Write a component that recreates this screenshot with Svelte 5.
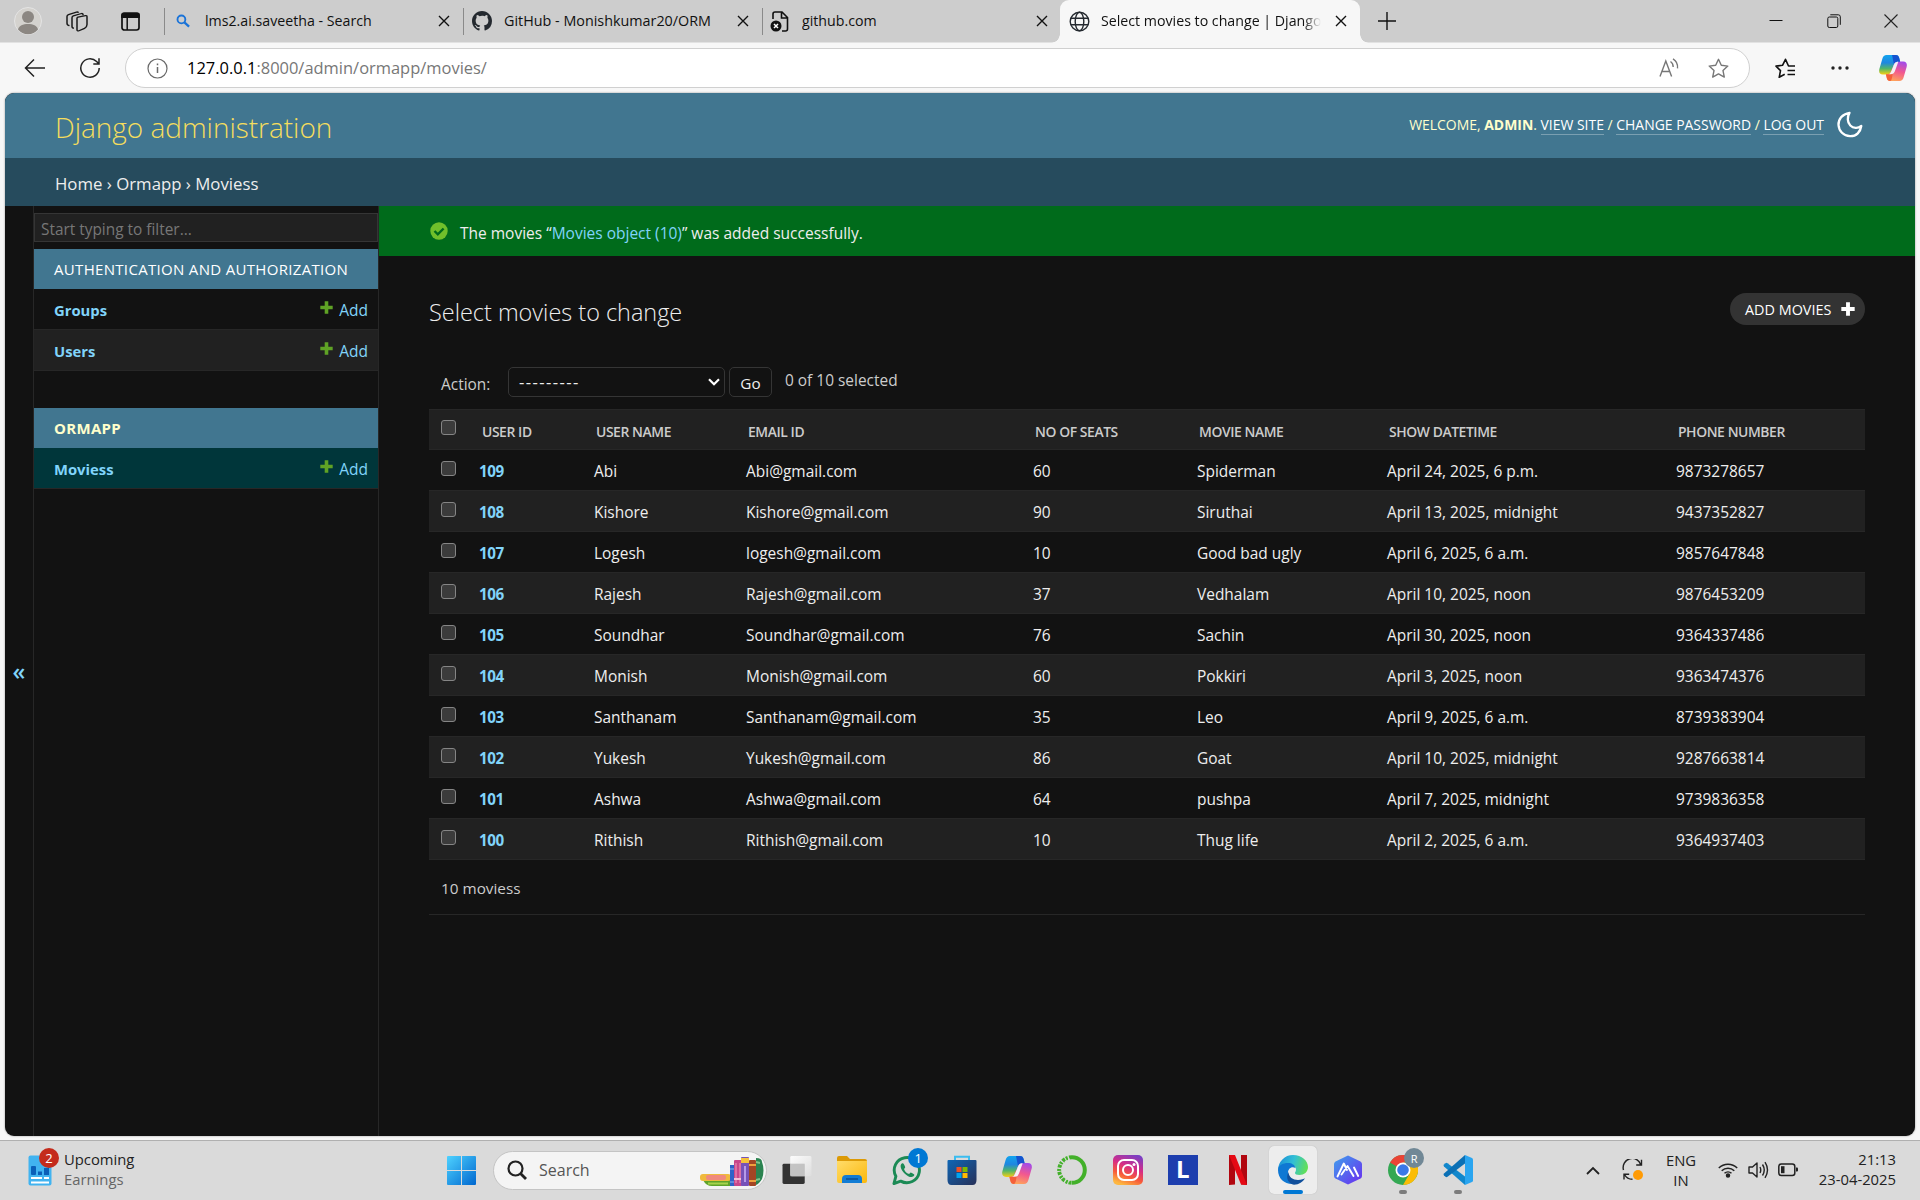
<script>
  const tabs = [
    { kind: 'search', title: 'lms2.ai.saveetha - Search', cls: 't1' },
    { kind: 'github', title: 'GitHub - Monishkumar20/ORM', cls: 't2' },
    { kind: 'file', title: 'github.com', cls: 't3' },
    { kind: 'globe', title: 'Select movies to change | Django', cls: 't4' },
  ];
  const columns = ['User ID', 'User Name', 'Email ID', 'No of seats', 'Movie Name', 'Show DateTime', 'Phone Number'];
  const rows = [
    ['109', 'Abi', 'Abi@gmail.com', '60', 'Spiderman', 'April 24, 2025, 6 p.m.', '9873278657'],
    ['108', 'Kishore', 'Kishore@gmail.com', '90', 'Siruthai', 'April 13, 2025, midnight', '9437352827'],
    ['107', 'Logesh', 'logesh@gmail.com', '10', 'Good bad ugly', 'April 6, 2025, 6 a.m.', '9857647848'],
    ['106', 'Rajesh', 'Rajesh@gmail.com', '37', 'Vedhalam', 'April 10, 2025, noon', '9876453209'],
    ['105', 'Soundhar', 'Soundhar@gmail.com', '76', 'Sachin', 'April 30, 2025, noon', '9364337486'],
    ['104', 'Monish', 'Monish@gmail.com', '60', 'Pokkiri', 'April 3, 2025, noon', '9363474376'],
    ['103', 'Santhanam', 'Santhanam@gmail.com', '35', 'Leo', 'April 9, 2025, 6 a.m.', '8739383904'],
    ['102', 'Yukesh', 'Yukesh@gmail.com', '86', 'Goat', 'April 10, 2025, midnight', '9287663814'],
    ['101', 'Ashwa', 'Ashwa@gmail.com', '64', 'pushpa', 'April 7, 2025, midnight', '9739836358'],
    ['100', 'Rithish', 'Rithish@gmail.com', '10', 'Thug life', 'April 2, 2025, 6 a.m.', '9364937403'],
  ];
</script>

{#snippet closeIcon()}
  <svg class="x" width="12" height="12" viewBox="0 0 12 12"><path d="M1 1l10 10M11 1L1 11" stroke="#111" stroke-width="1.4" fill="none" /></svg>
{/snippet}

{#snippet plus(color, size)}
  <svg width={size} height={size} viewBox="0 0 13 13"><path d="M4.7 0.3h3.6v4.4h4.4v3.6H8.3v4.4H4.7V8.3H.3V4.7h4.4z" fill={color} /></svg>
{/snippet}

{#snippet modelRow(name, selected, shaded)}
  <div class="model" class:selected class:shaded>
    <a class="name">{name}</a>
    <a class="add">{@render plus('#5fa225', 13)}<span>Add</span></a>
  </div>
{/snippet}

{#snippet copilot(w, h)}
  <svg width={w} height={h} viewBox="0 0 30 28" preserveAspectRatio="none">
    <path d="M8 0h10c2.300 0 3 1.200 3.600 3l1 4.200h-3c-2 0-3 1-3.600 3l-2.500 7.800c-.7 2-1.600 3-3.800 3H4c-3.200 0-4.500-2.600-3.600-5.800L3.600 4C4.400 1.300 5.700 0 8 0z" fill="url(#cpA)" />
    <path d="M22 28H12c-2.300 0-3-1.200-3.600-3l-1-4.200h1.800c2 0 3-1 3.600-3L16.300 10c.7-2 1.600-3 3.800-3H26c3.200 0 4.500 2.600 3.600 5.800L26.400 24c-.8 2.700-2.100 4-4.400 4z" fill="url(#cpB)" />
    <path d="M12 28c-2.300 0-3-1.200-3.600-3l-1-4.200h1.800c2 0 3-1 3.600-3l1.200-3.600.5 6.800c-.3 3-1 7-2.500 7z" fill="#f4603a" />
    <path d="M14 0h4c2.300 0 3 1.200 3.600 3l1 4.200h-3c-2 0-3 1-3.600 3z" fill="#1553cf" />
    <path d="M16.500 9.500q.8-2 3-2.300h1.200L17 17.500q-1.200 3.300-4.500 3.300H10q2-.3 2.800-2.800z" fill="#f4f1f6" />
  </svg>
{/snippet}

<svg class="defs" width="0" height="0">
  <defs>
    <linearGradient id="cpA" x1="0" y1="0" x2="0" y2="1"><stop offset="0" stop-color="#12a4ee" /><stop offset=".4" stop-color="#1f87e0" /><stop offset=".7" stop-color="#52b668" /><stop offset="1" stop-color="#f7cf12" /></linearGradient>
    <linearGradient id="cpB" x1=".7" y1="0" x2=".4" y2="1"><stop offset="0" stop-color="#a34be8" /><stop offset=".5" stop-color="#f2588f" /><stop offset="1" stop-color="#ffa45a" /></linearGradient>
    <linearGradient id="win" x1="0" y1="0" x2="1" y2="1"><stop offset="0" stop-color="#4ed2ff" /><stop offset="1" stop-color="#0067cf" /></linearGradient>
    <linearGradient id="fold" x1="0" y1="0" x2="1" y2="1"><stop offset="0" stop-color="#ffdc6a" /><stop offset="1" stop-color="#fbb80c" /></linearGradient>
    <linearGradient id="store" x1="0" y1="0" x2="1" y2="1"><stop offset="0" stop-color="#0f66b5" /><stop offset="1" stop-color="#273058" /></linearGradient>
    <linearGradient id="insta" x1=".35" y1="1" x2=".75" y2="0"><stop offset="0" stop-color="#fdb740" /><stop offset=".3" stop-color="#f7583a" /><stop offset=".6" stop-color="#d62c86" /><stop offset="1" stop-color="#7a3fc4" /></linearGradient>
    <linearGradient id="edgeA" x1="0" y1=".3" x2="1" y2=".5"><stop offset="0" stop-color="#1b8fd8" /><stop offset=".5" stop-color="#32bfd5" /><stop offset="1" stop-color="#63e055" /></linearGradient>
    <linearGradient id="hex" x1="0" y1="0" x2="1" y2="1"><stop offset="0" stop-color="#3ea0ec" /><stop offset="1" stop-color="#6c2bf0" /></linearGradient>
    <linearGradient id="tv" x1="0" y1="0" x2="1" y2="1"><stop offset="0" stop-color="#ffffff" /><stop offset="1" stop-color="#dedede" /></linearGradient>
  </defs>
</svg>

<div class="screen">
  <header class="tabstrip">
    <div class="profile">
      <svg width="28" height="28" viewBox="0 0 28 28"><circle cx="14" cy="14" r="13.500" fill="#d4d2ce" stroke="#e4e4e4" /><circle cx="14" cy="10" r="6" fill="#8c8782" /><path d="M4 22.500c1-4 5-5.500 10-5.500s9 1.500 10 5.500c-2.500 3-6 4.800-10 4.800S6.500 25.500 4 22.500z" fill="#8c8782" /></svg>
    </div>
    <svg class="work" width="22" height="21" viewBox="0 0 22 25" preserveAspectRatio="none" fill="none" stroke="#1a1a1a" stroke-width="1.500"><path d="M11 8.500q.2-.8 1-1.200l7.500-1.800q1.500-.2 1.500 1.200v9.500q0 3-2.500 4.500l-5.500 2.800q-2 .8-2-1.200z" /><path d="M8 20.500q-2 0-2-2V8q0-1.600 1.300-2.200L15.500 3q1.500-.3 1.500 1.300v.7" /><path d="M3.500 17.500Q1 17 1 14.500V6.500q0-1.500 1.500-2.200L10.500 1.300q1.500-.4 2 .8" /></svg>
    <svg class="actions" width="19" height="19" viewBox="0 0 19 21" preserveAspectRatio="none"><rect x="1" y="1.500" width="17" height="18.500" rx="2.500" fill="none" stroke="#111" stroke-width="1.700" /><path d="M.2 3Q.2.600 2.500.600h14q2.300 0 2.300 2.400v3.500H.2z" fill="#111" /><path d="M6.200 6v14" stroke="#111" stroke-width="1.500" /></svg>
    <div class="tabs">
      {#each tabs as tab}
        <div class="tab {tab.cls}">
          <span class="fav">
            {#if tab.kind === 'search'}
              <svg width="14" height="14" viewBox="0 0 15 15" fill="none" stroke="#1a73d8" stroke-width="2"><circle cx="5.800" cy="5.800" r="4.200" /><path d="M9 9l5 4.600" stroke-width="2.400" /></svg>
            {:else if tab.kind === 'github'}
              <svg width="20" height="20" viewBox="0 0 16 16"><path fill="#24292f" d="M8 0C3.580 0 0 3.580 0 8c0 3.540 2.290 6.530 5.470 7.590.4.070.55-.17.55-.38v-1.490c-2.010.37-2.530-.49-2.690-.94-.09-.23-.48-.94-.82-1.130-.28-.15-.68-.52-.01-.53.63-.01 1.080.58 1.230.82.72 1.210 1.870.87 2.330.66.070-.52.28-.87.51-1.070-1.780-.2-3.640-.89-3.640-3.950 0-.87.31-1.590.82-2.150-.08-.2-.36-1.020.08-2.120 0 0 .67-.21 2.200.82A7.600 7.600 0 018 3.860c.68 0 1.360.09 2 .27 1.530-1.040 2.200-.82 2.200-.82.44 1.100.16 1.920.08 2.120.51.56.82 1.270.82 2.150 0 3.070-1.870 3.750-3.650 3.950.29.25.54.73.54 1.480v2.200c0 .21.15.46.55.38A8 8 0 0016 8c0-4.420-3.580-8-8-8z" /></svg>
            {:else if tab.kind === 'file'}
              <svg width="19" height="21" viewBox="0 0 19 21"><path d="M3 8V3q0-2 2-2h7l5.500 5.500V18q0 2-2 2H12M11.500 1v6h6" fill="none" stroke="#111" stroke-width="1.600" /><circle cx="6" cy="15" r="5.500" fill="#111" /><path d="M4 13l4 4m0-4l-4 4" stroke="#fff" stroke-width="1.500" /></svg>
            {:else}
              <svg width="21" height="21" viewBox="0 0 21 21" fill="none" stroke="#24292f" stroke-width="1.400"><circle cx="10.500" cy="10.500" r="9.300" /><ellipse cx="10.500" cy="10.500" rx="4.300" ry="9.300" /><path d="M2 7.300h17M2 13.700h17" /></svg>
            {/if}
          </span>
          <span class="title">{tab.title}</span>
          {@render closeIcon()}
        </div>
      {/each}
    </div>
    <svg class="newtab" width="18" height="18" viewBox="0 0 18 18"><path d="M9 0v18M0 9h18" stroke="#111" stroke-width="1.400" /></svg>
    <div class="winctl">
      <svg width="14" height="14" viewBox="0 0 14 14"><path d="M.5 6.500h13" stroke="#111" /></svg>
      <svg width="14" height="14" viewBox="0 0 14 14" fill="none" stroke="#111"><rect x=".8" y="3" width="10" height="10.500" rx="1.500" /><path d="M3.300.8h8q2 0 2 2v8" /></svg>
      <svg width="14" height="14" viewBox="0 0 14 14"><path d="M.5.5l13 13M13.500.5l-13 13" stroke="#222" stroke-width="1.100" /></svg>
    </div>
  </header>

  <div class="toolbar">
    <svg class="back" width="22" height="20" viewBox="0 0 22 20" fill="none" stroke="#222" stroke-width="1.500"><path d="M21 10H2M10 1.500L1.500 10l8.500 8.500" /></svg>
    <svg class="reload" width="22" height="22" viewBox="0 0 22 22" fill="none" stroke="#222" stroke-width="1.500"><path d="M20.200 11a9.200 9.200 0 1 1-2.600-6.400L20 7M20 1.300V7h-5.700" /></svg>
    <div class="address">
      <svg width="21" height="21" viewBox="0 0 21 21" fill="none" stroke="#6a6a6a" stroke-width="1.200"><circle cx="10.500" cy="10.500" r="9.500" /><path d="M10.500 9v6M10.500 5.500v1.700" stroke-width="1.500" /></svg>
      <span class="url"><b>127.0.0.1</b>:8000/admin/ormapp/movies/</span>
      <svg class="read" width="20" height="20" viewBox="0 0 20 20" fill="none" stroke="#777" stroke-width="1.400"><path d="M1 18.500L6.800 3l5.800 15.500M3 13.500h7.600M11.500 3.500c1.800 1.200 2.700 3 2.700 5.500M14 .8c3.300 2 5 5 4.500 9.500" /></svg>
      <svg class="star" width="21" height="21" viewBox="0 0 21 21" fill="none" stroke="#777" stroke-width="1.400" stroke-linejoin="round"><path d="M10.500 1.300l2.800 6 6.500.8-4.800 4.500 1.300 6.500-5.800-3.200-5.800 3.200L6 12.600 1.200 8.100l6.500-.8z" /></svg>
    </div>
    <svg class="favs" width="21" height="21" viewBox="0 0 21 21" fill="none" stroke="#111" stroke-width="1.600" stroke-linejoin="round"><path d="M20 8h-6.500L10.500 1.300 7.500 7.300l-6.500.8 4.500 4.500-1.300 6.700 5.500-3M12.500 12.500H20M12.500 16.500H20" /></svg>
    <svg class="dots" width="18" height="4" viewBox="0 0 18 4" fill="#222"><circle cx="2" cy="2" r="1.700" /><circle cx="9" cy="2" r="1.700" /><circle cx="16" cy="2" r="1.700" /></svg>
    {@render copilot(28, 26)}
  </div>

  <main class="page">
    <div class="brand">
      <h1>Django administration</h1>
      <div class="tools">
        <span>Welcome, <strong>admin</strong>. <a>View site</a> / <a>Change password</a> / <a>Log out</a></span>
        <svg width="26" height="27" viewBox="0 0 26 27"><path d="M12.500 1.800C5 3 1.200 8.500 1.500 14c.4 6 5 11 11.500 11.200 6.500.2 10.500-4.500 11.300-10.200-3.300 2.700-8 2.500-11-.5C10.300 11.500 10 6 12.500 1.800z" fill="none" stroke="#fff" stroke-width="2.300" stroke-linejoin="round" /></svg>
      </div>
    </div>
    <nav class="crumbs">Home › Ormapp › Moviess</nav>
    <div class="body">
      <div class="toggle">«</div>
      <aside>
        <div class="filter">Start typing to filter...</div>
        <div class="app">Authentication and Authorization</div>
        {@render modelRow('Groups', false, false)}
        {@render modelRow('Users', false, true)}
        <div class="app current">Ormapp</div>
        {@render modelRow('Moviess', true, false)}
      </aside>
      <section class="main">
        <div class="message">
          <svg width="18" height="18" viewBox="0 0 18 18"><circle cx="9" cy="9" r="8.700" fill="#70bf2b" /><path d="M4.500 9l3.300 3.300 5.800-5.800" fill="none" stroke="#006b1b" stroke-width="2.400" /></svg>
          <span>The movies “<a>Movies object (10)</a>” was added successfully.</span>
        </div>
        <div class="content">
          <div class="heading">
            <h2>Select movies to change</h2>
            <button class="addbtn"><span>Add movies</span>{@render plus('#fff', 14)}</button>
          </div>
          <div class="actionbar">
            <span class="lbl">Action:</span>
            <div class="select"><span>---------</span><svg width="12" height="8" viewBox="0 0 12 8"><path d="M1 1.200l5 5 5-5" fill="none" stroke="#fff" stroke-width="2.200" /></svg></div>
            <button class="go">Go</button>
            <span class="count">0 of 10 selected</span>
          </div>
          <div class="grid">
            <div class="row head">
              <span class="check"></span>
              {#each columns as c}<span>{c}</span>{/each}
            </div>
            {#each rows as row}
              <div class="row">
                <span class="check"></span>
                {#each row as cell, i}<span class:id={i === 0}>{cell}</span>{/each}
              </div>
            {/each}
          </div>
          <div class="pager">10 moviess</div>
        </div>
      </section>
    </div>
  </main>

  <footer class="taskbar">
    <div class="widget">
      <div class="wicon">
        <svg width="24" height="31" viewBox="0 0 24 31"><rect x=".5" y=".5" width="23" height="30" rx="2" fill="#41b3f0" /><rect x="3" y="11" width="5" height="9" rx="1" fill="#0a5fb8" /><rect x="10" y="16.500" width="4" height="3.500" fill="#0a5fb8" /><rect x="16" y="13" width="5" height="7" fill="#0a5fb8" /><path d="M3 23h11M16 23h5M3 27.500h18" stroke="#fff" stroke-width="2" /></svg>
        <span class="badge red">2</span>
      </div>
      <div class="wtext"><span>Upcoming</span><span class="dim">Earnings</span></div>
    </div>
    <div class="apps">
      <svg class="start" width="29" height="29" viewBox="0 0 29 29"><path d="M1 0h13v14H0V1q0-1 1-1zM15 0h13q1 0 1 1v13H15zM0 15h14v14H1q-1 0-1-1zM15 15h14v13q0 1-1 1H15z" fill="url(#win)" /></svg>
      <div class="searchbox">
        <svg width="20" height="20" viewBox="0 0 20 20" fill="none" stroke="#222" stroke-width="2.200"><circle cx="8.500" cy="8.500" r="7" /><path d="M13.500 13.500l5.500 5.500" stroke-width="2.800" /></svg>
        <span>Search</span>
        <svg class="books" width="64" height="30" viewBox="0 0 64 30">
          <path d="M3 23h28v6H12q-6 0-9-6z" fill="#5fa32a" /><path d="M8 26.500h20" stroke="#a6d34c" stroke-width="2" />
          <rect x="0" y="17" width="31" height="7" rx="3" fill="#f0b93c" /><rect x="6" y="18" width="20" height="5" rx="2" fill="#f08a7d" />
          <rect x="30" y="8" width="5" height="21" fill="#2f62c8" /><path d="M30 12h5M30 25h5" stroke="#8ab4f0" />
          <rect x="34" y="3" width="8" height="26" rx="1" fill="#c9478b" /><path d="M36 6v20M40 6v20" stroke="#f09abc" /><path d="M34 22h8" stroke="#f4c0d4" stroke-width="2" />
          <rect x="41" y="0" width="8" height="29" rx="1" fill="#7652b8" /><path d="M41 3.500h8" stroke="#f5c13c" stroke-width="5" /><path d="M45 9v16" stroke="#b69ae8" stroke-width="2" />
          <rect x="49" y="3" width="7" height="26" rx="1" fill="#a34524" /><path d="M49 8h7M49 24h7" stroke="#eea13c" stroke-width="2" />
          <path d="M56 1q6 0 6 4 3 8 0 17-3 5-6 6z" fill="#2b8350" /><path d="M56 5l4 1M56 23l4-1" stroke="#80c48b" stroke-width="2" />
        </svg>
      </div>
      <div class="slot"><svg width="30" height="28" viewBox="0 0 30 29"><rect x="0" y="8" width="23" height="21" rx="1.500" fill="#333" /><rect x="8" y="0" width="22" height="21" rx="1.500" fill="url(#tv)" opacity=".93" /><rect x="8" y="8" width="15" height="13" fill="#bcbcbc" opacity=".8" /></svg></div>
      <div class="slot"><svg width="30" height="28" viewBox="0 0 30 28"><path d="M0 2q0-2 2-2h8l3 3h15q2 0 2 2v5H0z" fill="#dc9a06" /><path d="M0 5h30v20q0 2-2 2H2q-2 0-2-2z" fill="url(#fold)" /><path d="M5 27v-4q0-4 4-4h12q4 0 4 4v4z" fill="#127cd4" /><path d="M9 23h12" stroke="#0a4f94" stroke-width="1.500" /></svg></div>
      <div class="slot"><svg width="30" height="30" viewBox="0 0 31 31"><path d="M2 29.500l2-7.500a13 13 0 1 1 5 5z" fill="none" stroke="#1b8a55" stroke-width="3" stroke-linejoin="round" /><path d="M10.500 8.500c-3 2-1.500 6.500 2.500 10.500s8.500 5 10 2c.5-1-.3-1.500-3.500-3-1 0-1 1.500-2 1.500-2 0-5-3.500-5-5 .3-.8 1.500-1.200 1-2.300-1-2.700-1.500-4-3-3.700z" fill="#1b8a55" /></svg><span class="badge blue">1</span></div>
      <div class="slot"><svg width="30" height="30" viewBox="0 0 30 30"><path d="M8 6V1.800h14V6" fill="none" stroke="#3bbdf0" stroke-width="2" /><path d="M.5 6q0-1 1-1h27q1 0 1 1v19q0 5-4 5h-21q-4 0-4-5z" fill="url(#store)" /><path fill="#f25022" d="M9.500 12h5v5h-5z" /><path fill="#7fba00" d="M15.500 12h5v5h-5z" /><path fill="#00a4ef" d="M9.500 18h5v5h-5z" /><path fill="#ffb900" d="M15.500 18h5v5h-5z" /></svg></div>
      <div class="slot">{@render copilot(30, 28)}</div>
      <div class="slot"><svg width="30" height="30" viewBox="0 0 30 30" fill="none" stroke="#43b02a"><path d="M15 2.200a12.800 12.800 0 1 1 0 25.600" stroke-width="4" /><path d="M15 2.200a12.800 12.800 0 0 0 0 25.600" stroke-width="4" stroke-dasharray="3 1.300 2 1" /><path d="M13 4a11.500 11.500 0 0 0 0 22" stroke="#dadada" stroke-width="1.100" stroke-dasharray="2 2" /></svg></div>
      <div class="slot"><svg width="30" height="30" viewBox="0 0 30 30"><rect width="30" height="30" rx="5" fill="url(#insta)" /><g fill="none" stroke="#fff" stroke-width="2"><rect x="5" y="5" width="20" height="20" rx="6" /><circle cx="15" cy="15" r="5" /></g><circle cx="21" cy="9.500" r="1.500" fill="#fff" /></svg></div>
      <div class="slot"><div class="ell">L</div></div>
      <div class="slot"><svg width="18" height="30" viewBox="0 0 18 30"><path d="M0 0h6v29.500L0 30zM12 0h6v30l-6-.5z" fill="#b1060f" /><path d="M0 0h6l12 30-6-.6z" fill="#e50914" /></svg></div>
      <div class="slot open"><svg width="30" height="30" viewBox="0 0 30 30"><path d="M0 15A15 15 0 0 1 15 0c9 0 15 6 15 12 0 5-4 8-8.500 8-3 0-4.500-1-4.500-2 0-1 1-1.500 1-3.500 0-3-3-5.500-7-5.500C6 9 1 12 0 15z" fill="url(#edgeA)" /><path d="M0 15c0-4.500 5-7 10-7 4 0 7 2 7.500 5-4-2-7.500.5-7.500 5 0 5.500 4.500 9.500 9 10-1.300.8-2.700 1-4 1C7 29.500 0 24 0 15z" fill="#0f78d3" /><path d="M10.500 17c0 5 4.500 8 9.500 8 3.500 0 6-1.300 7-1.700-2 3.500-6 6.500-11 6.500-5-1-9-6-5.500-12.800z" fill="#11509c" /></svg><i class="bar"></i></div>
      <div class="slot"><svg width="28" height="30" viewBox="0 0 28 30"><path d="M14 .5l12.500 6q1.500 1 1.500 2.500v12q0 1.500-1.500 2.500L14 29.500l-12.500-6Q0 22.500 0 21V9q0-1.500 1.500-2.500z" fill="url(#hex)" /><path d="M3.500 21.500L9.800 8.500 13 15M7.500 19.500l6-8.500 6 10M20 12.500l4.200 8.500" fill="none" stroke="#fff" stroke-width="1.900" stroke-linecap="round" stroke-linejoin="round" /></svg></div>
      <div class="slot"><svg width="30" height="30" viewBox="0 0 30 30"><circle cx="15" cy="15" r="15" fill="#34a853" /><path d="M15 15L2 7.500A15 15 0 0 1 28 7.500H15z" fill="#ea4335" /><path d="M15 7.500h13A15 15 0 0 1 15 30l6.500-11.300z" fill="#fbbc05" /><circle cx="15" cy="15" r="7.500" fill="#fff" /><circle cx="15" cy="15" r="5.800" fill="#3b78e7" /></svg><span class="badge grey">R</span><i class="dot"></i></div>
      <div class="slot"><svg width="30" height="30" viewBox="0 0 30 30"><path d="M22 30L1 11.500q-1-1 0-2l1.500-1.300q1-.7 2 0L22 21.500z" fill="#1187cc" /><path d="M22 0L1 18.500q-1 1 0 2l1.500 1.300q1 .7 2 0L22 8.500z" fill="#0b70b5" /><path d="M22 0l7 3q1 .5 1 1.500v21q0 1-1 1.500l-7 3z" fill="#2aa5f0" /></svg><i class="dot"></i></div>
    </div>
    <div class="tray">
      <svg class="chev" width="14" height="9" viewBox="0 0 14 9"><path d="M1 8l6-6 6 6" fill="none" stroke="#222" stroke-width="1.800" /></svg>
      <svg class="sync" width="22" height="22" viewBox="0 0 22 22" fill="none" stroke="#222" stroke-width="1.400"><path d="M1.500 11A9 9 0 0 1 19 6M19.500.8V6h-5.300M2 20.500V15.300h5.200M2.500 15.500a9 9 0 0 0 8 4.800" /><circle cx="16" cy="16" r="5" fill="#ff9b05" stroke="none" /></svg>
      <div class="lang"><span>ENG</span><span>IN</span></div>
      <svg class="wifi" width="20" height="16" viewBox="0 0 20 16" fill="none" stroke="#222" stroke-width="1.500"><path d="M.8 6a13 13 0 0 1 18.400 0M3.700 8.700a9 9 0 0 1 12.600 0M6.500 11.300a5.200 5.200 0 0 1 7 0" /><circle cx="10" cy="13.500" r="1.500" fill="#222" /></svg>
      <svg class="vol" width="21" height="18" viewBox="0 0 21 18" fill="none" stroke="#222" stroke-width="1.400" stroke-linejoin="round"><path d="M1 6h3.500L9 2v14l-4.500-4H1zM12 6q1.500 3 0 6M14.500 3.500q3.500 5.500 0 11M17 1.200q5 7.800 0 15.600" /></svg>
      <svg class="bat" width="20" height="14" viewBox="0 0 20 14"><rect x=".8" y="1" width="16" height="11.500" rx="2.500" fill="none" stroke="#222" stroke-width="1.500" /><rect x="3" y="3.200" width="3.500" height="7" fill="#222" /><path d="M18 4.500h1q1 0 1 1v2q0 1-1 1h-1z" fill="#222" /></svg>
      <div class="clock"><span>21:13</span><span>23-04-2025</span></div>
    </div>
  </footer>
</div>

<style>
  :global(body) { background: #f7f7f7; }
  .defs { display: block; position: absolute; }
  .screen { width: 1920px; height: 1200px; overflow: hidden; display: flex; flex-direction: column; background: #f7f7f7; font-family: "Open Sans", "Noto Sans", sans-serif; color: #eee; }
  svg { flex: none; display: block; }
  h1, h2 { margin: 0; font-weight: 300; }
  button { font: inherit; margin: 0; }

  .tabstrip { height: 42px; box-sizing: content-box; border-bottom: 1px solid #e2e2e2; background: #cdcdcd; display: flex; align-items: center; color: #111; font-size: 14.200px; }
  .profile { margin-left: 14px; }
  .work { margin-left: 24px; }
  .actions { margin-left: 33px; }
  .tabs { display: flex; align-self: stretch; margin-left: 24px; }
  .tab { display: flex; align-items: center; box-sizing: border-box; height: 42px; position: relative; }
  .tab .title { flex: 1; white-space: nowrap; overflow: hidden; margin-top: -1px; }
  .tab .fav { flex: none; }
  .t1, .t2, .t3 { border-left: 1px solid transparent; border-image: linear-gradient(transparent 9px, #8a8a8a 9px, #8a8a8a 34px, transparent 34px) 1; }
  .t1 { width: 299px; padding: 0 13px 0 11px; }
  .t1 .fav { width: 29px; }
  .t2 { width: 299px; padding: 0 13px 0 8px; }
  .t2 .fav { width: 32px; }
  .t2 .title { font-size: 14.350px; }
  .t3 { width: 298px; padding: 0 12px 0 7px; }
  .t3 .fav { width: 32px; }
  .t4 { width: 300px; height: 43px; padding: 0 13px 1px 9px; background: #f7f7f7; border-radius: 9px 9px 0 0; }
  .t4::before, .t4::after { content: ""; position: absolute; bottom: 0; width: 9px; height: 9px; }
  .t4::before { left: -9px; background: radial-gradient(circle at 0 0, transparent 8.500px, #f7f7f7 9px); }
  .t4::after { right: -9px; background: radial-gradient(circle at 100% 0, transparent 8.500px, #f7f7f7 9px); }
  .t4 .fav { width: 32px; }
  .t4 .title { max-width: 220px; margin-right: 14px; -webkit-mask: linear-gradient(90deg, #000 92%, transparent); mask: linear-gradient(90deg, #000 92%, transparent); }
  .newtab { margin-left: 18px; }
  .winctl { margin-left: auto; margin-right: 22px; display: flex; gap: 43.500px; }

  .toolbar { height: 50px; display: flex; align-items: center; color: #666; }
  .back { margin-left: 24px; }
  .reload { margin-left: 33px; }
  .address { margin-left: 24px; width: 1625px; height: 40px; box-sizing: border-box; border: 1px solid #d0d0d0; border-radius: 20px; background: #fff; display: flex; align-items: center; padding-left: 21px; padding-right: 20px; }
  .url { margin-left: 19px; font-size: 16.470px; flex: 1; margin-top: -1px; color: #777; }
  .url b { font-weight: 400; color: #000; }
  .star { margin-left: 29px; }
  .favs { margin-left: 25px; }
  .dots { margin-left: 35px; margin-right: 30px; }

  .page { margin: 0 5px; height: 1043px; border-radius: 9px; overflow: hidden; background: #121212; display: flex; flex-direction: column; flex: none; box-shadow: 0 0 2px #888; }
  .brand { height: 65px; background: #417690; display: flex; justify-content: space-between; padding: 0 52px 0 50px; }
  .brand h1 { font-size: 27.950px; line-height: 68px; color: #f5dd5d; }
  .tools { display: flex; gap: 13px; align-items: center; color: #ffc; font-size: 13.950px; text-transform: uppercase; padding-bottom: 2px; }
  .tools > span { margin-top: -1px; white-space: nowrap; }
  .tools a { color: #fff; border-bottom: 1px solid rgba(255, 255, 255, 0.3); }
  .crumbs { height: 48px; line-height: 52px; background: #264b5d; padding-left: 50px; font-size: 16.800px; color: #eee; }
  .body { flex: 1; display: flex; }
  .toggle { width: 28px; box-sizing: border-box; display: flex; align-items: center; justify-content: center; color: #81d4fa; font-size: 23px; font-weight: 600; padding: 0; }
  aside { width: 344px; border: solid #272727; border-width: 0 1px; padding-top: 7px; }
  .filter { height: 27px; border: 1px solid #353535; background: #212121; color: #777; font-size: 15.400px; line-height: 31px; padding-left: 6px; margin-bottom: 7px; }
  .app { height: 40px; background: #417690; color: #fff; text-transform: uppercase; font-size: 15px; line-height: 41px; padding-left: 20px; letter-spacing: 0.320px; }
  .current { margin-top: 37px; color: #ffc; font-weight: 700; }
  .model { border-bottom: 1px solid #272727; display: flex; justify-content: space-between; align-items: center; padding: 2px 10px 0 20px; height: 38px; font-size: 15.500px; color: #81d4fa; }
  .name { font-weight: 700; font-size: 14.800px; }
  .add { display: flex; align-items: center; gap: 6px; }
  .add :global(svg) { margin-top: -6px; }
  .shaded { background: #212121; }
  .selected { background: #00363a; }

  .main { flex: 1; }
  .message { height: 50px; background: #006b1b; display: flex; align-items: center; padding-left: 51px; gap: 12px; font-size: 15.500px; }
  .message span { margin-top: 3px; }
  .message a { color: #81d4fa; }
  .content { padding: 37px 50px 0; }
  .heading { display: flex; justify-content: space-between; height: 74px; }
  .heading h2 { font-size: 23.450px; line-height: 38px; }
  .addbtn { width: 135px; height: 32px; border: 0; border-radius: 16px; background: #333; color: #fff; text-transform: uppercase; display: flex; align-items: center; justify-content: space-between; padding: 1px 10px 0 15px; font-size: 14.400px; }
  .addbtn :global(svg) { margin-top: -2px; }
  .actionbar { height: 42px; display: flex; font-size: 15.450px; color: #ccc; }
  .lbl { width: 67px; padding-left: 12px; line-height: 34px; }
  .select { box-sizing: border-box; width: 217px; height: 30px; border: 1px solid #353535; border-radius: 5px; display: flex; justify-content: space-between; align-items: center; padding: 0 4px 0 10px; color: #eee; }
  .select span { font-size: 16.500px; letter-spacing: 1.450px; margin-top: -2px; }
  .go { box-sizing: border-box; width: 43px; height: 30px; margin-left: 4px; border: 1px solid #353535; border-radius: 5px; background: #121212; color: #eee; font-size: 15.300px; padding: 1px 0 0; line-height: 26px; }
  .count { margin-left: 13px; line-height: 27px; }
  .row { display: grid; grid-template-columns: 51px 114px 152px 287px 164px 190px 289px 1fr; height: 40px; border-bottom: 1px solid #272727; line-height: 43px; font-size: 15.460px; color: #eee; white-space: nowrap; }
  .row:nth-child(odd) { background: #212121; }
  .head { border-top: 1px solid #272727; height: 39px; text-transform: uppercase; font-size: 13.900px; letter-spacing: -0.420px; font-weight: 600; color: #ccc; }
  .head span:not(.check) { padding-left: 2px; }
  .check { width: 13px; height: 13px; margin: 11px 0 0 12px; border: 1px solid #858585; border-radius: 3px; background: #3b3b3b; }
  .head .check { margin-top: 10px; }
  .row .id { color: #81d4fa; font-weight: 700; font-size: 15.200px; letter-spacing: -0.400px; margin-left: -1px; }
  .pager { height: 54px; line-height: 57px; padding-left: 12px; border-bottom: 1px solid #272727; font-size: 15.300px; color: #ccc; }

  .taskbar { margin-top: 4px; height: 60px; border-top: 1px solid #b0b0b0; box-sizing: border-box; background: #dadada; display: flex; align-items: center; color: #222; flex: none; padding-bottom: 1px; }
  .widget { display: flex; width: 419px; padding-left: 28px; box-sizing: border-box; }
  .wicon { position: relative; margin-top: 4px; width: 36px; }
  .badge { position: absolute; border-radius: 50%; display: flex; align-items: center; justify-content: center; width: 20px; height: 20px; color: #fff; font-size: 13px; }
  .red { background: #c42b1c; left: 11px; top: -7px; }
  .wtext { display: flex; flex-direction: column; font-size: 14.800px; line-height: 20px; margin-top: -2px; }
  .dim { color: #666; }
  .apps { display: flex; align-items: center; }
  .start { margin-left: 28px; }
  .searchbox { width: 274px; height: 39px; box-sizing: border-box; margin: 0 6px 0 17px; background: #f4f4f4; border: 1px solid #c4c4c4; border-radius: 20px; display: flex; align-items: center; padding-left: 13px; padding-right: 2px; font-size: 16px; color: #555; }
  .searchbox span { margin-left: 12px; flex: 1; }
  .books { margin-top: 4px; }
  .slot { width: 48px; height: 48px; margin-right: 7.100px; border-radius: 5px; display: flex; align-items: center; justify-content: center; position: relative; }
  .open { background: #ededed; box-shadow: 0 0 1px #aaa; }
  .bar, .dot { position: absolute; bottom: 0; height: 4px; border-radius: 2px; }
  .bar { width: 20px; background: #0078d4; left: 14px; }
  .dot { width: 8px; background: #7c7c7c; left: 20px; }
  .blue { background: #0078d4; right: 3px; top: 2px; }
  .grey { background: #718896; right: 3px; top: 2px; font-size: 11px; }
  .ell { width: 30px; height: 30px; background: #1d3eae; color: #fff; font: 700 24px/28px "Open Sans", sans-serif; text-align: center; }
  .tray { margin-left: auto; display: flex; align-items: center; padding-right: 24px; font-size: 14.800px; line-height: 20px; }
  .sync { margin-left: 22px; }
  .lang { display: flex; flex-direction: column; align-items: center; width: 30px; margin-left: 22px; }
  .wifi { margin-left: 22px; }
  .vol { margin-left: 10px; }
  .bat { margin-left: 9px; }
  .clock { display: flex; flex-direction: column; align-items: flex-end; width: 78px; margin: -2px 0 0 20px; }
</style>
